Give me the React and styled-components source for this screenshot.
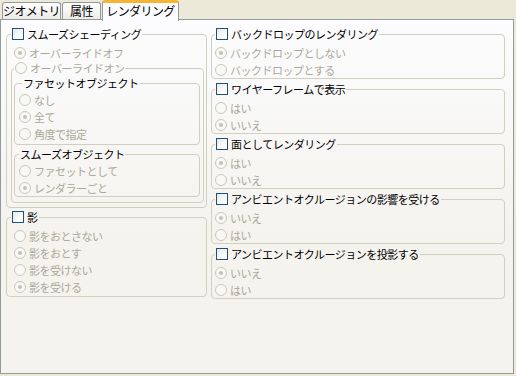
import React from 'react';
import styled, { createGlobalStyle } from 'styled-components';

const GlobalStyle = createGlobalStyle`
  html, body {
    margin: 0;
    padding: 0;
    background: #ece9d8;
    font-family: "Noto Sans CJK JP", "Liberation Sans", sans-serif;
    font-size: 11px;
    font-weight: 400;
  }
`;

const Window = styled.div`
  width: 516px;
  height: 376px;
  background: #ece9d8;
  overflow: hidden;
`;

const TabStrip = styled.div`
  display: flex;
  align-items: flex-end;
  gap: 1px;
  height: 19px;
  padding-left: 2px;
  position: relative;
  z-index: 1;
`;

const Tab = styled.div`
  box-sizing: border-box;
  width: ${p => p.$w}px;
  height: ${p => (p.$active ? 21 : 17)}px;
  margin-bottom: ${p => (p.$active ? -2 : 0)}px;
  border: 1px solid #919b9c;
  border-bottom: none;
  border-radius: 3px 3px 0 0;
  background: ${p => (p.$active ? '#fcfcfe' : 'linear-gradient(#ffffff, #ecebe6)')};
  border-top: ${p => (p.$active ? '3px solid #f5b433' : '1px solid #919b9c')};
  display: flex;
  align-items: center;
  justify-content: center;
  padding-bottom: ${p => (p.$active ? 2 : 0)}px;
  color: #000;
  font-size: 12px;
  letter-spacing: -0.6px;
  line-height: 14px;
  white-space: nowrap;
`;

const Panel = styled.div`
  box-sizing: border-box;
  width: 514px;
  height: 355px;
  border: 1px solid #919b9c;
  background: linear-gradient(#fcfcfe, #f4f3ee 60%);
  display: flex;
  gap: 4px;
  padding: 7px 8px 0 5px;
`;

const Column = styled.div`
  width: ${p => p.$w}px;
  display: flex;
  flex-direction: column;
  gap: ${p => p.$gap}px;
`;

const Group = styled.fieldset`
  margin: ${p => p.$mt || 0}px 0 0 0;
  min-width: 0;
  border: 1px solid #d0d0bf;
  border-radius: 4px;
  padding: ${p => p.$pad};
  display: flex;
  flex-direction: column;
`;

const Legend = styled.legend`
  padding: 0 1px;
  margin-left: ${p => p.$ml || 0}px;
  height: 14px;
  line-height: 14px;
  display: flex;
  align-items: center;
  gap: ${p => p.$gap || 3}px;
  color: ${p => (p.$dim ? '#aca899' : '#000')};
  letter-spacing: -0.5px;
  white-space: nowrap;
`;

const Checkbox = styled.span`
  box-sizing: border-box;
  width: 12px;
  height: 12px;
  border: 1px solid #1c5180;
  background: linear-gradient(135deg, #e6e6e0, #ffffff 70%);
  flex: none;
`;

const Radio = styled.span`
  box-sizing: border-box;
  width: 12px;
  height: 12px;
  border-radius: 50%;
  border: 1px solid #cac8bb;
  background: #f8f8f4;
  flex: none;
  display: flex;
  align-items: center;
  justify-content: center;
  &::after {
    content: '';
    width: 4px;
    height: 4px;
    border-radius: 50%;
    background: ${p => (p.$on ? '#c4c2b4' : 'transparent')};
  }
`;

const Row = styled.div`
  height: 17px;
  display: flex;
  align-items: center;
  gap: 3px;
  padding-left: ${p => p.$indent || 0}px;
  color: #aca899;
  letter-spacing: -0.5px;
  white-space: nowrap;
`;

const Options = ({ items, indent }) =>
  items.map(([label, on]) => (
    <Row key={label} $indent={indent}>
      <Radio $on={on} />
      {label}
    </Row>
  ));

const RightGroup = ({ title, items }) => (
  <Group $pad="3px 3px 0 3px">
    <Legend>
      <Checkbox />
      {title}
    </Legend>
    <Options items={items} />
  </Group>
);

export default function App() {
  return (
    <Window>
      <GlobalStyle />
      <TabStrip>
        <Tab $w={59}>ジオメトリ</Tab>
        <Tab $w={39}>属性</Tab>
        <Tab $w={77} $active>レンダリング</Tab>
      </TabStrip>
      <Panel>
        <Column $w={201} $gap={2}>
          <Group $pad="3px 2px 4px 4px">
            <Legend>
              <Checkbox />
              スムーズシェーディング
            </Legend>
            <Options indent={3} items={[['オーバーライドオフ', true]]} />
            <Group $pad="1px 3px 5px 2px">
              <Legend $dim>
                <Radio />
                オーバーライドオン
              </Legend>
              <Group $pad="1px 3px 2px 4px">
                <Legend $ml={3}>ファセットオブジェクト</Legend>
                <Options items={[['なし', false], ['全て', true], ['角度で指定', false]]} />
              </Group>
              <Group $mt={2} $pad="1px 3px 0 4px">
                <Legend>スムーズオブジェクト</Legend>
                <Options items={[['ファセットとして', false], ['レンダラーごと', true]]} />
              </Group>
            </Group>
          </Group>
          <Group $pad="3px 2px 1px 7px">
            <Legend $ml={-3}>
              <Checkbox />
              影
            </Legend>
            <Options
              items={[
                ['影をおとさない', false],
                ['影をおとす', true],
                ['影を受けない', false],
                ['影を受ける', true],
              ]}
            />
          </Group>
        </Column>
        <Column $w={294} $gap={3}>
          <RightGroup
            title="バックドロップのレンダリング"
            items={[['バックドロップとしない', true], ['バックドロップとする', false]]}
          />
          <RightGroup title="ワイヤーフレームで表示" items={[['はい', false], ['いいえ', true]]} />
          <RightGroup title="面としてレンダリング" items={[['はい', true], ['いいえ', false]]} />
          <RightGroup
            title="アンビエントオクルージョンの影響を受ける"
            items={[['いいえ', true], ['はい', false]]}
          />
          <RightGroup
            title="アンビエントオクルージョンを投影する"
            items={[['いいえ', true], ['はい', false]]}
          />
        </Column>
      </Panel>
    </Window>
  );
}
